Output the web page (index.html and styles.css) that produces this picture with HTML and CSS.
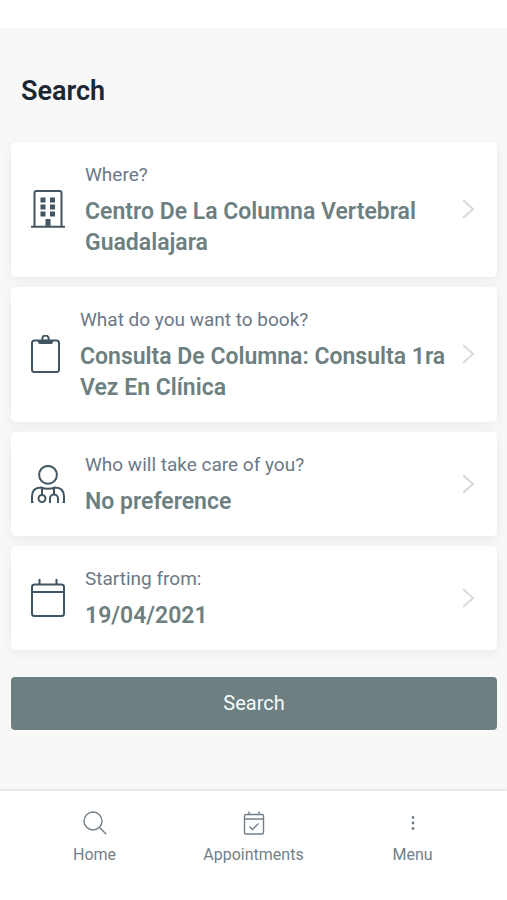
FILE: index.html
```html
<!DOCTYPE html>
<html lang="en">
<head>
<meta charset="utf-8">
<meta name="viewport" content="width=device-width, initial-scale=1">
<title>Search</title>
<link rel="stylesheet" href="styles.css">
</head>
<body>
<main class="page">
  <h1 class="title">Search</h1>
  <form class="form">
    <button class="card" type="button">
      <svg class="icon" width="34" height="38" viewBox="0 0 34 38" aria-hidden="true">
        <path d="M3.500 36.500V3Q3.500 1 5.500 1H28.500Q30.500 1 30.500 3V36.500M0 36.800H34"/>
        <path class="solid" d="M9.500 7.500h5v5h-5zM19 7.500h5v5h-5zM9.500 14.500h5v5h-5zM19 14.500h5v5h-5zM9.500 21.500h5v5h-5zM19 21.500h5v5h-5zM14.500 29h5v8h-5z"/>
      </svg>
      <span class="text"><span class="label">Where?</span><span class="value">Centro De La Columna Vertebral Guadalajara</span></span>
      <svg class="chevron" width="13" height="20" viewBox="0 0 13 20" aria-hidden="true"><path d="M1 1L11 10L1 19"/></svg>
    </button>
    <button class="card" type="button">
      <svg class="icon" width="29" height="38" viewBox="0 0 29 38" aria-hidden="true">
        <rect x="1" y="5.500" width="27" height="31.500" rx="2.500"/>
        <circle cx="14.500" cy="3.800" r="3.200"/>
        <path class="solid" d="M7 5h4.500q3 3.500 6 0H22v2q0 2-2 2H9q-2 0-2-2z"/>
      </svg>
      <span class="text"><span class="label">What do you want to book?</span><span class="value">Consulta De Columna: Consulta 1ra Vez En Clínica</span></span>
      <svg class="chevron" width="13" height="20" viewBox="0 0 13 20" aria-hidden="true"><path d="M1 1L11 10L1 19"/></svg>
    </button>
    <button class="card" type="button">
      <svg class="icon" width="34" height="38" viewBox="0 0 34 38" aria-hidden="true">
        <circle cx="17" cy="9.800" r="8.900"/>
        <path d="M1 38V31.500Q1 22.500 10 22.500Q17 25 24 22.500Q33 22.500 33 31.500V38M1 37.200H2.500M31.500 37.200H33M11 23V30M23 23V29.500M19 38V33.500a4 4 0 0 1 8 0V38"/>
        <circle cx="11" cy="33.500" r="3.500"/>
      </svg>
      <span class="text"><span class="label">Who will take care of you?</span><span class="value">No preference</span></span>
      <svg class="chevron" width="13" height="20" viewBox="0 0 13 20" aria-hidden="true"><path d="M1 1L11 10L1 19"/></svg>
    </button>
    <button class="card" type="button">
      <svg class="icon" width="34" height="38" viewBox="0 0 34 38" aria-hidden="true">
        <rect x="1" y="5.500" width="32" height="31.500" rx="2.500"/>
        <path d="M1 13H33M8.500 0V5M25.500 0V5"/>
      </svg>
      <span class="text"><span class="label">Starting from:</span><span class="value">19/04/2021</span></span>
      <svg class="chevron" width="13" height="20" viewBox="0 0 13 20" aria-hidden="true"><path d="M1 1L11 10L1 19"/></svg>
    </button>
    <button class="submit" type="submit">Search</button>
  </form>
</main>
<nav class="nav">
  <a class="nav-link" href="#home">
    <svg class="nav-icon" width="24" height="24" viewBox="0 0 24 24" aria-hidden="true"><circle cx="10" cy="10" r="9"/><path d="M16.500 16.500L23.300 23.300"/></svg>
    Home
  </a>
  <a class="nav-link" href="#appointments">
    <svg class="nav-icon" width="24" height="24" viewBox="0 0 24 24" aria-hidden="true"><rect x="2.500" y="3.500" width="19" height="19.500" rx="1.500"/><path d="M2.500 8H21.500M7 .5V3.500M17 .5V3.500M7.500 15.500L10.500 18.500L16.500 12.500"/></svg>
    Appointments
  </a>
  <a class="nav-link" href="#menu">
    <svg class="nav-icon dots" width="24" height="24" viewBox="0 0 24 24" aria-hidden="true"><circle cx="12" cy="6.500" r="1.400"/><circle cx="12" cy="12" r="1.400"/><circle cx="12" cy="17.500" r="1.400"/></svg>
    Menu
  </a>
</nav>
</body>
</html>
```
FILE: styles.css
```css
* {
  box-sizing: border-box;
}

body {
  margin: 0;
  min-height: 100vh;
  padding-top: 28px;
  display: flex;
  flex-direction: column;
  background: #fff;
  font-family: Roboto, sans-serif;
}

.page {
  flex: 1;
  padding: 45px 10px 32px 11px;
  background: #f8f8f8;
}

.title {
  margin: 0 0 33px;
  padding: 0 10px;
  font-size: 27px;
  line-height: 36px;
  font-weight: 600;
  color: #1b2733;
}

.form {
  display: flex;
  flex-direction: column;
  gap: 10px;
}

button {
  border: 0;
  font-family: inherit;
  cursor: pointer;
}

.card {
  display: flex;
  align-items: center;
  gap: 20px;
  padding: 20px 22px 19px 20px;
  border-radius: 5px;
  background: #fff;
  box-shadow: 0 3px 12px rgba(0, 0, 0, 0.06);
  text-align: left;
}

.icon,
.chevron {
  flex: none;
  margin-bottom: 2px;
  fill: none;
  stroke-width: 2;
}

.icon {
  stroke: #425563;
}

.icon .solid {
  fill: #425563;
  stroke: none;
}

.chevron {
  stroke: #d9d9d9;
}

.text {
  flex: 1;
  display: flex;
  flex-direction: column;
  gap: 9px;
  margin-right: -4px;
}

.label {
  font-size: 19px;
  line-height: 25px;
  color: #6c7887;
}

.value {
  font-size: 23px;
  line-height: 31px;
  font-weight: 600;
  color: #6d7f7f;
}

.submit {
  margin-top: 17px;
  height: 53px;
  padding: 0 0 2px;
  border-radius: 4px;
  background: #6d7f81;
  color: #f5fafa;
  font-size: 20px;
}

.nav {
  display: flex;
  padding: 20px 15px 34px;
  background: #fff;
  box-shadow: 0 -1px 3px rgba(0, 0, 0, 0.12);
}

.nav-link {
  flex: 1;
  display: flex;
  flex-direction: column;
  align-items: center;
  gap: 8px;
  font-size: 16px;
  line-height: 23px;
  color: #737f88;
  text-decoration: none;
}

.nav-icon {
  fill: none;
  stroke: #737f88;
  stroke-width: 1.4;
}

.dots {
  fill: #737f88;
  stroke: none;
}
```
